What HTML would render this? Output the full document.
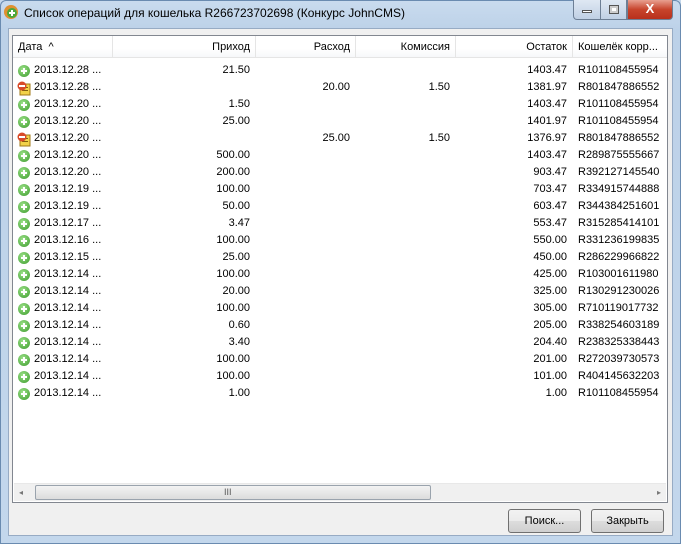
<!DOCTYPE html>
<html><head><meta charset="utf-8"><style>
*{margin:0;padding:0;box-sizing:border-box}
body{width:681px;height:544px;overflow:hidden;background:#c5d8ec;font-family:"Liberation Sans",sans-serif;font-size:11px;color:#000;position:relative}
.frame{position:absolute;left:0;top:0;width:681px;height:544px;background:linear-gradient(180deg,#c9dbee 0,#bcd1e8 30px,#c3d7ec 100%);border:1px solid #6a8bb0;border-radius:6px 6px 0 0}
.title{position:absolute;left:24px;top:6px;font-size:12px;color:#000}
.client{position:absolute;left:8px;top:28px;width:665px;height:508px;background:#f0f0f0;border:1px solid #97abc4}
.list{position:absolute;left:12px;top:35px;width:656px;height:468px;background:#fff;border:1px solid #828790}
.hdr{position:absolute;left:0;top:0;height:22px;width:654px;border-bottom:1px solid #e5e5e5;background:linear-gradient(#fff,#fff 60%,#f7f8fa)}
.hc{position:absolute;top:0;height:22px;line-height:22px;border-right:1px solid #e5e5e5;padding:0 5px}
.row{position:absolute;left:0;height:17px;line-height:17px;width:654px}
.c{position:absolute;top:0}
.r{text-align:right}
.ic{position:absolute;left:5px;top:3px;width:12px;height:12px;border-radius:50%;background:radial-gradient(circle at 40% 35%,#9de28a,#3a9a2a);}
.ic:after{content:"";position:absolute;left:3px;top:5px;width:6px;height:2px;background:#fff}
.ic:before{content:"";position:absolute;left:5px;top:3px;width:2px;height:6px;background:#fff}
.ic2{position:absolute;left:4px;top:2px;width:14px;height:15px}
.sb{position:absolute;left:1px;top:447px;width:652px;height:18px;background:#f0f0f0;border-top:1px solid #e8e8e8}
.thumb{position:absolute;left:21px;top:1px;width:396px;height:15px;border:1px solid #9aa3ad;border-radius:2px;background:linear-gradient(#f3f3f3,#dcdcdc)}
.btn{position:absolute;top:509px;width:73px;height:24px;border:1px solid #707070;border-radius:3px;background:linear-gradient(#f2f2f2 0,#ebebeb 50%,#dddddd 51%,#cfcfcf);text-align:center;line-height:22px;font-size:11px}
.wb{position:absolute;top:0;height:20px;border:1px solid #6d7f95;border-top:none}
</style></head><body>
<div class="frame"></div>
<svg style="position:absolute;left:3px;top:4px" width="16" height="16"><circle cx="8" cy="8" r="7" fill="#e09030"/><circle cx="9" cy="9" r="5" fill="#4aa83a"/><rect x="6" y="8" width="6" height="2" fill="#fff"/><rect x="8" y="6" width="2" height="6" fill="#fff"/></svg>
<div class="title">Список операций для кошелька R266723702698 (Конкурс JohnCMS)</div>
<div class="wb" style="left:573px;width:28px;border-radius:0 0 0 4px;background:linear-gradient(#dfe8f3,#c0d0e4)"><div style="position:absolute;left:8px;top:10px;width:10px;height:3px;border:1px solid #555;background:#fff"></div></div>
<div class="wb" style="left:600px;width:27px;background:linear-gradient(#dfe8f3,#c0d0e4)"><div style="position:absolute;left:8px;top:5px;width:10px;height:9px;border:1px solid #555;background:#fff;box-shadow:inset 0 0 0 2px #ccc"></div></div>
<div class="wb" style="left:627px;width:46px;border-radius:0 0 4px 0;background:linear-gradient(#e8a090,#c7442c 50%,#b8301c);color:#fff;font-weight:bold;font-size:13px;text-align:center;line-height:18px">X</div>
<div class="client"></div>
<div class="list">
<div class="hdr">
<div class="hc" style="left:0;width:100px">Дата &nbsp;^</div>
<div class="hc r" style="left:100px;width:143px">Приход</div>
<div class="hc r" style="left:243px;width:100px">Расход</div>
<div class="hc r" style="left:343px;width:100px">Комиссия</div>
<div class="hc r" style="left:443px;width:117px">Остаток</div>
<div class="hc" style="left:560px;width:94px;border:none">Кошелёк корр...</div>
</div>
<div id="rows"></div>
<div class="sb"><div style="position:absolute;left:5px;top:4px;font-size:8px;color:#777">◂</div><div class="thumb"><div style="position:absolute;left:188px;top:1px;font-size:9px;color:#555">III</div></div><div style="position:absolute;right:5px;top:4px;font-size:8px;color:#777">▸</div></div>
</div>
<div class="btn" style="left:508px">Поиск...</div>
<div class="btn" style="left:591px">Закрыть</div>
<script>
var d=[["2013.12.28 ...","21.50","","","1403.47","R101108455954",0],
["2013.12.28 ...","","20.00","1.50","1381.97","R801847886552",1],
["2013.12.20 ...","1.50","","","1403.47","R101108455954",0],
["2013.12.20 ...","25.00","","","1401.97","R101108455954",0],
["2013.12.20 ...","","25.00","1.50","1376.97","R801847886552",1],
["2013.12.20 ...","500.00","","","1403.47","R289875555667",0],
["2013.12.20 ...","200.00","","","903.47","R392127145540",0],
["2013.12.19 ...","100.00","","","703.47","R334915744888",0],
["2013.12.19 ...","50.00","","","603.47","R344384251601",0],
["2013.12.17 ...","3.47","","","553.47","R315285414101",0],
["2013.12.16 ...","100.00","","","550.00","R331236199835",0],
["2013.12.15 ...","25.00","","","450.00","R286229966822",0],
["2013.12.14 ...","100.00","","","425.00","R103001611980",0],
["2013.12.14 ...","20.00","","","325.00","R130291230026",0],
["2013.12.14 ...","100.00","","","305.00","R710119017732",0],
["2013.12.14 ...","0.60","","","205.00","R338254603189",0],
["2013.12.14 ...","3.40","","","204.40","R238325338443",0],
["2013.12.14 ...","100.00","","","201.00","R272039730573",0],
["2013.12.14 ...","100.00","","","101.00","R404145632203",0],
["2013.12.14 ...","1.00","","","1.00","R101108455954",0]];
var h="";d.forEach(function(r,i){
var ic=r[6]?'<svg class="ic2" width="14" height="15"><rect x="3" y="3" width="10" height="11" fill="#f2d24a" stroke="#a07818"/><rect x="5" y="6" width="6" height="1" fill="#806010"/><rect x="5" y="9" width="6" height="1" fill="#806010"/><circle cx="5" cy="5" r="4.5" fill="#d84a2a"/><rect x="2" y="4" width="6" height="2" fill="#fff"/></svg>':'<div class="ic"></div>';
h+='<div class="row" style="top:'+(26+17*i)+'px">'+ic+'<div class="c" style="left:21px">'+r[0]+'</div><div class="c r" style="left:100px;width:137px">'+r[1]+'</div><div class="c r" style="left:243px;width:94px">'+r[2]+'</div><div class="c r" style="left:343px;width:94px">'+r[3]+'</div><div class="c r" style="left:443px;width:111px">'+r[4]+'</div><div class="c" style="left:565px">'+r[5]+'</div></div>';});
document.getElementById("rows").innerHTML=h;
</script>
</body></html>
